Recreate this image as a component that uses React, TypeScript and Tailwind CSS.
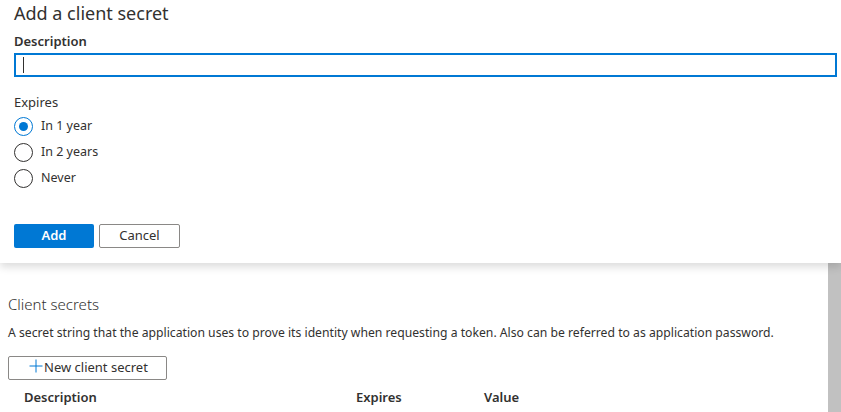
import React from "react";

function Radio({ checked, label }: { checked?: boolean; label: string }) {
  return (
    <div className="flex items-center h-[26px]">
      <span
        className={`w-[19px] h-[19px] rounded-full border flex items-center justify-center ${
          checked ? "border-[#0078d4]" : "border-[#323130]"
        }`}
      >
        {checked && <span className="w-[9px] h-[9px] rounded-full bg-[#0078d4]" />}
      </span>
      <span className="ml-[8px] text-[12.5px] text-[#323130]">{label}</span>
    </div>
  );
}

export default function App() {
  return (
    <div
      className="w-[841px] h-[412px] overflow-hidden bg-white flex flex-col text-[#323130]"
      style={{ fontFamily: '"Noto Sans", "Open Sans", sans-serif' }}
    >
      <div className="relative z-10 h-[263px] shrink-0 bg-white pl-[14px] pr-[4px] shadow-[0_4px_8px_rgba(0,0,0,0.14)]">
        <div className="pt-[1px] text-[18px] leading-[24px]">Add a client secret</div>
        <div className="mt-[7px] text-[13px] font-semibold leading-[18px]">Description</div>
        <div className="mt-[3px] h-[24px] border-2 border-[#0078d4] flex items-center pl-[7px]">
          <span className="w-[1px] h-[16px] bg-[#323130]" />
        </div>
        <div className="mt-[16px] text-[13px] leading-[18px]">Expires</div>
        <div className="mt-[2px] flex flex-col">
          <Radio checked label="In 1 year" />
          <Radio label="In 2 years" />
          <Radio label="Never" />
        </div>
        <div className="mt-[33px] flex gap-[5px]">
          <button className="w-[80px] h-[24px] bg-[#0078d4] text-white text-[13px] font-semibold rounded-[2px]">
            Add
          </button>
          <button className="w-[81px] h-[24px] border border-[#8a8886] text-[13px] text-[#323130] rounded-[2px]">
            Cancel
          </button>
        </div>
      </div>
      <div className="flex flex-1 min-h-0">
        <div className="flex-1 px-[8px]">
          <div className="mt-[31px] text-[15px] leading-[20px] font-light">Client secrets</div>
          <div className="mt-[10px] text-[12.2px] leading-[18px]">
            A secret string that the application uses to prove its identity when requesting a token. Also can be referred to as application password.
          </div>
          <button className="mt-[14px] w-[159px] h-[24px] border border-[#8a8886] flex items-center text-[13px] text-[#323130] rounded-[2px]">
            <svg className="ml-[20px] mr-[1px] -mt-[4px]" width="14" height="14" viewBox="0 0 14 14">
              <path d="M7 0.5V13.5M0.5 7H13.5" stroke="#0078d4" strokeWidth="1" fill="none" />
            </svg>
            <span>New client secret</span>
          </button>
          <div className="mt-[8px] flex text-[13px] font-semibold leading-[18px]">
            <span className="ml-[16px] w-[332px]">Description</span>
            <span className="w-[128px]">Expires</span>
            <span>Value</span>
          </div>
        </div>
        <div className="w-[13px] bg-[#c1c1c1]" />
      </div>
    </div>
  );
}
